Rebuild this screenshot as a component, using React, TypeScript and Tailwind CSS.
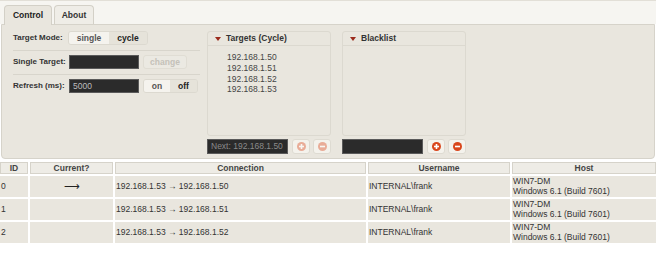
import React from "react";

const PlusIcon = ({ faded }: { faded?: boolean }) => (
  <svg width="9" height="9" viewBox="0 0 10 10" className={faded ? "opacity-40" : ""}>
    <circle cx="5" cy="5" r="5" fill="#d9461b" />
    <rect x="2.2" y="4.1" width="5.6" height="1.8" fill="#fff" />
    <rect x="4.1" y="2.2" width="1.8" height="5.6" fill="#fff" />
  </svg>
);

const MinusIcon = ({ faded }: { faded?: boolean }) => (
  <svg width="9" height="9" viewBox="0 0 10 10" className={faded ? "opacity-40" : ""}>
    <circle cx="5" cy="5" r="5" fill="#d9461b" />
    <rect x="2.2" y="4.1" width="5.6" height="1.8" fill="#fff" />
  </svg>
);

const Tri = () => (
  <svg width="6" height="4" viewBox="0 0 6 4" className="mr-[5px]">
    <polygon points="0,0 6,0 3,4" fill="#9b2b1c" />
  </svg>
);

function ListPanel({
  title,
  items,
  inputText,
  faded,
}: {
  title: string;
  items: string[];
  inputText?: string;
  faded?: boolean;
}) {
  return (
    <div className="flex flex-col w-[124px]">
      <div className="h-[105px] rounded-[3px] border border-[#dcd9d0] flex flex-col">
        <div className="h-[14px] border-b border-[#dcd9d0] flex items-center pl-[7px] font-bold text-[8.5px] text-[#333]">
          <Tri />
          {title}
        </div>
        <div className="pl-[19px] pt-[6px] text-[8.5px] leading-[10.8px] text-[#444]">
          {items.map((i) => (
            <div key={i}>{i}</div>
          ))}
        </div>
      </div>
      <div className="flex items-center mt-[3px] gap-[3px]">
        <div className="w-[81px] h-[15px] bg-[#2b2b2b] border border-[#5a5a5a] text-[8.5px] text-[#8a8a8a] pl-[3px] flex items-center">
          {inputText}
        </div>
        <div className="ml-[1px] w-[18px] h-[15px] rounded-[3px] bg-[#f4f2ec] border border-[#dedbd2] flex items-center justify-center">
          <PlusIcon faded={faded} />
        </div>
        <div className="w-[18px] h-[15px] rounded-[3px] bg-[#f4f2ec] border border-[#dedbd2] flex items-center justify-center">
          <MinusIcon faded={faded} />
        </div>
      </div>
    </div>
  );
}

const rows = [
  { id: "0", cur: true, conn: "192.168.1.53 → 192.168.1.50" },
  { id: "1", cur: false, conn: "192.168.1.53 → 192.168.1.51" },
  { id: "2", cur: false, conn: "192.168.1.53 → 192.168.1.52" },
];

export default function App() {
  return (
    <div
      className="w-[656px] h-[260px] bg-white overflow-hidden text-[#333]"
      style={{ fontFamily: '"Liberation Sans", Arial, sans-serif' }}
    >
      {/* tab strip */}
      <div className="h-[24px] bg-[#f6f5f1] border-t border-[#e2dfd7] flex items-end pl-[4px] gap-[2px] relative">
        <div className="h-[20px] w-[48px] rounded-t-[4px] border border-b-0 border-[#d3d0c7] bg-[#e9e6de] flex items-center justify-center font-bold text-[8.5px] text-[#222] relative z-10 mb-[-1px]">
          Control
        </div>
        <div className="h-[19px] w-[40px] rounded-t-[4px] border border-b-0 border-[#d3d0c7] bg-[#efede7] flex items-center justify-center font-bold text-[8.5px] text-[#333]">
          About
        </div>
      </div>
      {/* panel */}
      <div className="h-[135px] mx-[1px] bg-[#e9e6de] border border-[#d6d3ca] rounded-b-[4px] flex pt-[6px] pl-[11px]">
        <div className="w-[187px] flex flex-col">
          <div className="h-[14px] flex items-center">
            <div className="w-[55px] font-bold text-[8px] text-[#333]">Target Mode:</div>
            <div className="flex h-[14px] rounded-[3px] border border-[#dcd9d0] overflow-hidden">
              <div className="w-[40px] bg-[#f5f3ee] flex items-center justify-center font-bold text-[8.5px] text-[#555]">
                single
              </div>
              <div className="w-[38px] bg-[#e6e3da] flex items-center justify-center font-bold text-[8.5px] text-[#222]">
                cycle
              </div>
            </div>
          </div>
          <div className="h-px bg-[#d8d5cc] mt-[5px]" />
          <div className="h-[14px] flex items-center mt-[4px]">
            <div className="w-[56px] font-bold text-[8px] text-[#333]">Single Target:</div>
            <div className="w-[70px] h-[14px] bg-[#2b2b2b] border border-[#5a5a5a]" />
            <div className="ml-[4px] w-[44px] h-[14px] rounded-[3px] bg-[#ebe9e2] border border-[#e0ddd4] flex items-center justify-center font-bold text-[8.5px] text-[#c4c1b9]">
              change
            </div>
          </div>
          <div className="h-px bg-[#d8d5cc] mt-[5px]" />
          <div className="h-[14px] flex items-center mt-[4px]">
            <div className="w-[56px] font-bold text-[8px] text-[#333]">Refresh (ms):</div>
            <div className="w-[70px] h-[14px] bg-[#2b2b2b] border border-[#5a5a5a] text-[8.5px] text-[#bbb] pl-[3px] flex items-center">
              5000
            </div>
            <div className="ml-[4px] flex h-[14px] rounded-[3px] border border-[#dcd9d0] overflow-hidden">
              <div className="w-[26px] bg-[#f5f3ee] flex items-center justify-center font-bold text-[8.5px] text-[#555]">
                on
              </div>
              <div className="w-[27px] bg-[#e6e3da] flex items-center justify-center font-bold text-[8.5px] text-[#222]">
                off
              </div>
            </div>
          </div>
        </div>
        <div className="ml-[7px] flex gap-[11px]">
          <ListPanel
            title="Targets (Cycle)"
            items={["192.168.1.50", "192.168.1.51", "192.168.1.52", "192.168.1.53"]}
            inputText="Next: 192.168.1.50"
            faded
          />
          <ListPanel title="Blacklist" items={[]} />
        </div>
      </div>
      {/* table */}
      <div className="mt-[3px] grid grid-cols-[28px_83px_251px_142px_1fr] gap-[2px] text-[8.5px] text-[#333]">
        {["ID", "Current?", "Connection", "Username", "Host"].map((h) => (
          <div
            key={h}
            className="h-[12px] bg-[#eeece6] border border-[#d6d3ca] flex items-center justify-center font-bold text-[#444]"
          >
            {h}
          </div>
        ))}
        {rows.map((r) => (
          <React.Fragment key={r.id}>
            <div className="h-[21px] bg-[#e9e6de] flex items-center pl-[1px]">{r.id}</div>
            <div className="h-[21px] bg-[#e9e6de] flex items-center justify-center text-[11px] text-[#222]">
              {r.cur ? "⟶" : ""}
            </div>
            <div className="h-[21px] bg-[#e9e6de] flex items-center pl-[1px]">{r.conn}</div>
            <div className="h-[21px] bg-[#e9e6de] flex items-center pl-[1px]">INTERNAL\frank</div>
            <div className="h-[21px] bg-[#e9e6de] flex flex-col justify-center pl-[1px] leading-[9.5px]">
              <div>WIN7-DM</div>
              <div>Windows 6.1 (Build 7601)</div>
            </div>
          </React.Fragment>
        ))}
      </div>
    </div>
  );
}
